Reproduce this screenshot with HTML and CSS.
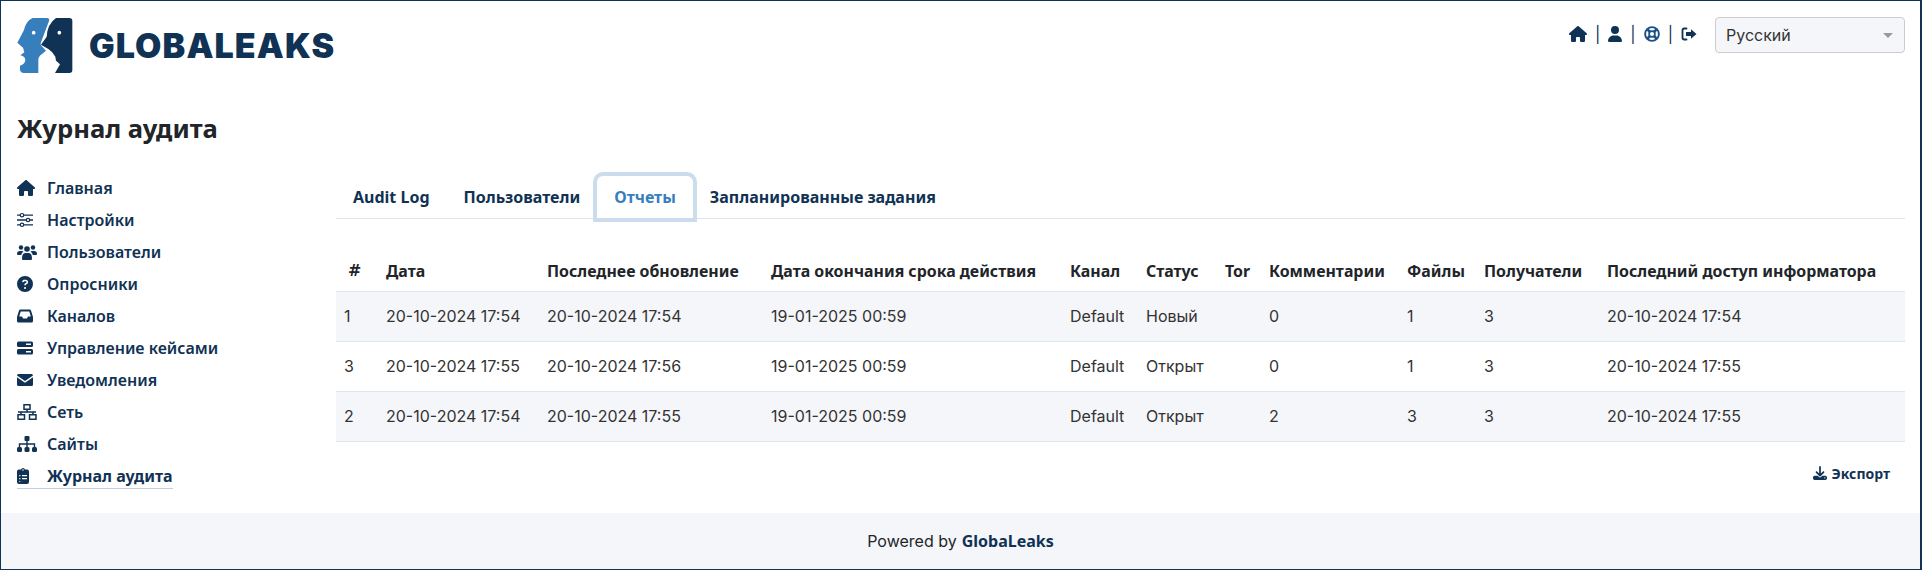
FILE: index.html
```html
<!DOCTYPE html>
<html>
<head>
    <title>Журнал аудита</title>
    <link rel="stylesheet" href="styles.css">
</head>
<body>
    <div class="frame">
        <header class="top">
            <a class="logo">
                <svg class="logo-mark" viewBox="21 21 168 168" width="56" height="56">
                    <path fill="#377ebd" d="M68 24 H110 Q120 24 117 33 L92 100 Q91 105 95 108 L108 122 L96 132 Q85 140 85 150 V189 H42 Q30 189 30 178 V167 Q45 163 46 150 Q46 140 31 136 L43 127 L39 113 L22 98 L42 60 Q48 32 68 24 Z"/>
                    <circle cx="71" cy="68" r="5.500" fill="#fff"/>
                    <path fill="#103254" d="M138 24 H178 Q187 24 187 33 V180 Q187 189 178 189 H135 L150 163 L138 152 L136 140 Q128 125 115 117 L93 104 L110 80 Q112 42 138 24 Z"/>
                    <circle cx="148" cy="68" r="5.500" fill="#fff"/>
                </svg>
                <span class="logo-text">GLOBALEAKS</span>
            </a>
            <div class="top-right">
                <nav class="top-icons">
                    <svg class="ico" viewBox="0 0 576 512" width="18" height="16"><path d="M575.8 255.5c0 18-15 32.1-32 32.1h-32l.7 160.2c0 2.7-.2 5.4-.5 8.1V472c0 22.1-17.9 40-40 40H456c-1.1 0-2.2 0-3.3-.1c-1.4 .1-2.8 .1-4.2 .1H416 392c-22.1 0-40-17.9-40-40V448 384c0-17.7-14.3-32-32-32H256c-17.7 0-32 14.3-32 32v64 24c0 22.1-17.9 40-40 40H160 128.1c-1.5 0-3-.1-4.5-.2c-1.2 .1-2.4 .2-3.6 .2H104c-22.1 0-40-17.9-40-40V360c0-.9 0-1.9 .1-2.8V287.6H32c-18 0-32-14-32-32.1c0-9 3-17 10-24L266.4 8c7-7 15-8 22-8s15 2 21 7L564.8 231.5c8 7 12 15 11 24z"/></svg>
                    <span class="sep">|</span>
                    <svg class="ico" viewBox="0 0 448 512" width="14" height="16"><path d="M224 256A128 128 0 1 0 224 0a128 128 0 1 0 0 256zm-45.7 48C79.8 304 0 383.8 0 482.3C0 498.7 13.3 512 29.7 512H418.3c16.4 0 29.7-13.3 29.7-29.7C448 383.8 368.2 304 269.7 304H178.3z"/></svg>
                    <span class="sep">|</span>
                    <svg class="ico" viewBox="0 0 16 16" width="16" height="16"><circle cx="8" cy="8" r="6.900" fill="none" stroke="#1d5186" stroke-width="1.900"/><circle cx="8" cy="8" r="2.900" fill="none" stroke="#1d5186" stroke-width="1.700"/><path d="M3.400 3.400 L6 6 M10 10 L12.600 12.600 M12.600 3.400 L10 6 M6 10 L3.400 12.600" stroke="#1d5186" stroke-width="2.600"/></svg>
                    <span class="sep">|</span>
                    <svg class="ico" viewBox="0 0 16 16" width="16" height="16"><path d="M5.500 2.500 H3.200 Q1.500 2.500 1.500 4.200 V11.800 Q1.500 13.500 3.200 13.500 H5.500" fill="none" stroke="#103254" stroke-width="1.800" stroke-linecap="round"/><path d="M10 3.200 L15.500 8 L10 12.800 V10 H5 V6 H10 Z"/></svg>
                </nav>
                <div class="lang">
                    <span>Русский</span>
                    <i class="caret"></i>
                </div>
            </div>
        </header>

        <h1 class="page-title">Журнал аудита</h1>

        <div class="main">
            <ul class="side">
                <li><a><svg class="ico" viewBox="0 0 576 512" width="18" height="16"><path d="M575.8 255.5c0 18-15 32.1-32 32.1h-32l.7 160.2c0 2.7-.2 5.4-.5 8.1V472c0 22.1-17.9 40-40 40H456c-1.1 0-2.2 0-3.3-.1c-1.4 .1-2.8 .1-4.2 .1H416 392c-22.1 0-40-17.9-40-40V448 384c0-17.7-14.3-32-32-32H256c-17.7 0-32 14.3-32 32v64 24c0 22.1-17.9 40-40 40H160 128.1c-1.5 0-3-.1-4.5-.2c-1.2 .1-2.4 .2-3.6 .2H104c-22.1 0-40-17.9-40-40V360c0-.9 0-1.9 .1-2.8V287.6H32c-18 0-32-14-32-32.1c0-9 3-17 10-24L266.4 8c7-7 15-8 22-8s15 2 21 7L564.8 231.5c8 7 12 15 11 24z"/></svg>Главная</a></li>
                <li><a><svg class="ico" viewBox="0 0 16 16" width="16" height="16"><path d="M0 3.200 H16 M0 8 H16 M0 12.800 H16" stroke="#103254" stroke-width="1.300"/><circle cx="5" cy="3.200" r="1.700" fill="#fff" stroke="#103254" stroke-width="1.200"/><circle cx="11" cy="8" r="1.700" fill="#fff" stroke="#103254" stroke-width="1.200"/><circle cx="5" cy="12.800" r="1.700" fill="#fff" stroke="#103254" stroke-width="1.200"/></svg>Настройки</a></li>
                <li><a><svg class="ico" viewBox="0 0 20 16" width="20" height="16"><circle cx="4" cy="3.500" r="2.200"/><circle cx="16" cy="3.500" r="2.200"/><circle cx="10" cy="5" r="2.800"/><path d="M0 10 Q0 7 3 7 H5 Q6 7 6.500 7.500 Q4.500 8.500 4.200 11 H1 Q0 11 0 10 Z M20 10 Q20 7 17 7 H15 Q14 7 13.500 7.500 Q15.500 8.500 15.800 11 H19 Q20 11 20 10 Z M5 14.500 Q5 9 8.500 9 H11.500 Q15 9 15 14.500 Q15 16 14 16 H6 Q5 16 5 14.500 Z"/></svg>Пользователи</a></li>
                <li><a><svg class="ico" viewBox="0 0 512 512" width="16" height="16"><path fill-rule="evenodd" d="M256 0a256 256 0 1 1 0 512a256 256 0 1 1 0-512z M169 165c-8 17 3 34 20 34c12 0 20-8 24-19c3-9 10-16 21-16h46c15 0 26 12 26 26c0 10-5 19-13 23l-42 24c-10 6-16 17-16 28v14c0 14 11 25 25 25s25-11 25-25v-1l33-19c24-14 38-39 38-67c0-41-34-74-76-74h-46c-31 0-56 19-65 47z M224 384a32 32 0 1 0 64 0a32 32 0 1 0-64 0z"/></svg>Опросники</a></li>
                <li><a><svg class="ico" viewBox="0 0 16 16" width="16" height="16"><path fill-rule="evenodd" d="M3.500 1.500 H12.500 Q13.600 1.500 14 2.500 L16 9 V13 Q16 14.500 14.500 14.500 H1.500 Q0 14.500 0 13 V9 L2 2.500 Q2.400 1.500 3.500 1.500 Z M3.700 3.500 L2.200 8.500 H5 L6 10.500 H10 L11 8.500 H13.800 L12.300 3.500 Z"/></svg>Каналов</a></li>
                <li><a><svg class="ico" viewBox="0 0 16 16" width="16" height="16"><path fill-rule="evenodd" d="M1.500 1.500 H14.500 Q16 1.500 16 3 V5.500 Q16 7 14.500 7 H1.500 Q0 7 0 5.500 V3 Q0 1.500 1.500 1.500 Z M9 3.600 V5 H14 V3.600 Z M1.500 9 H14.500 Q16 9 16 10.500 V13 Q16 14.500 14.500 14.500 H1.500 Q0 14.500 0 13 V10.500 Q0 9 1.500 9 Z M9 11.100 V12.500 H14 V11.100 Z"/></svg>Управление кейсами</a></li>
                <li><a><svg class="ico" viewBox="0 0 16 16" width="16" height="16"><path d="M1.500 2 H14.500 Q16 2 16 3.500 L8 9 L0 3.500 Q0 2 1.500 2 Z M0 5.300 L8 10.800 L16 5.300 V12.500 Q16 14 14.500 14 H1.500 Q0 14 0 12.500 Z"/></svg>Уведомления</a></li>
                <li><a><svg class="ico" viewBox="0 0 20 16" width="20" height="16"><path fill="none" stroke="#103254" stroke-width="1.500" d="M7 .8 H13 V5.200 H7 Z M1 10.800 H7.500 V15.200 H1 Z M12.500 10.800 H19 V15.200 H12.500 Z M10 5 V8 M1 8 H19 M4 8 V11 M16 8 V11"/></svg>Сеть</a></li>
                <li><a><svg class="ico" viewBox="0 0 20 16" width="20" height="16"><rect x="7.500" y="0" width="5" height="5" rx="1"/><rect x="0" y="11" width="5" height="5" rx="1.500"/><rect x="7.500" y="11" width="5" height="5" rx="1.500"/><rect x="15" y="11" width="5" height="5" rx="1.500"/><path fill="none" stroke="#103254" stroke-width="1.400" d="M10 5 V11 M2.500 11 V8 H17.500 V11"/></svg>Сайты</a></li>
                <li><a class="current"><svg class="ico" viewBox="0 0 12 16" width="12" height="16"><path fill-rule="evenodd" d="M4 1.500 Q4.500 0 6 0 Q7.500 0 8 1.500 H10 Q12 1.500 12 3.500 V14 Q12 16 10 16 H2 Q0 16 0 14 V3.500 Q0 1.500 2 1.500 Z M5.200 2 a.8 .8 0 1 0 1.600 0 a.8 .8 0 1 0-1.600 0 Z M2.200 7 h1.200 v1.200 h-1.200 Z M5 7 h5 v1.200 h-5 Z M2.200 10 h1.200 v1.200 h-1.200 Z M5 10 h5 v1.200 h-5 Z M2.200 13 h1.200 v.8 h-1.200 Z"/></svg>Журнал аудита</a></li>
            </ul>

            <section class="content">
                <div class="tabs">
                    <a class="tab">Audit Log</a>
                    <a class="tab">Пользователи</a>
                    <a class="tab active">Отчеты</a>
                    <a class="tab">Запланированные задания</a>
                </div>

                <table class="reports">
                    <thead>
                        <tr>
                            <th class="num">#</th>
                            <th>Дата</th>
                            <th>Последнее обновление</th>
                            <th>Дата окончания срока действия</th>
                            <th>Канал</th>
                            <th>Статус</th>
                            <th>Tor</th>
                            <th>Комментарии</th>
                            <th>Файлы</th>
                            <th>Получатели</th>
                            <th>Последний доступ информатора</th>
                        </tr>
                    </thead>
                    <tbody>
                        <tr>
                            <td>1</td><td>20-10-2024 17:54</td><td>20-10-2024 17:54</td><td>19-01-2025 00:59</td><td>Default</td><td>Новый</td><td></td><td>0</td><td>1</td><td>3</td><td>20-10-2024 17:54</td>
                        </tr>
                        <tr>
                            <td>3</td><td>20-10-2024 17:55</td><td>20-10-2024 17:56</td><td>19-01-2025 00:59</td><td>Default</td><td>Открыт</td><td></td><td>0</td><td>1</td><td>3</td><td>20-10-2024 17:55</td>
                        </tr>
                        <tr>
                            <td>2</td><td>20-10-2024 17:54</td><td>20-10-2024 17:55</td><td>19-01-2025 00:59</td><td>Default</td><td>Открыт</td><td></td><td>2</td><td>3</td><td>3</td><td>20-10-2024 17:55</td>
                        </tr>
                    </tbody>
                </table>

                <div class="export-row">
                    <a class="export"><svg class="ico" viewBox="0 0 512 512" width="14" height="14"><path d="M288 32c0-17.700-14.300-32-32-32s-32 14.300-32 32V274.700l-73.400-73.400c-12.500-12.500-32.800-12.500-45.300 0s-12.500 32.800 0 45.300l128 128c12.500 12.500 32.800 12.500 45.300 0l128-128c12.500-12.500 12.500-32.800 0-45.300s-32.800-12.500-45.300 0L288 274.700V32zM64 352c-35.300 0-64 28.700-64 64v32c0 35.300 28.700 64 64 64H448c35.300 0 64-28.700 64-64V416c0-35.300-28.700-64-64-64H346.500l-45.300 45.300c-25 25-65.500 25-90.500 0L165.500 352H64zm368 56a24 24 0 1 1 0 48 24 24 0 1 1 0-48z"/></svg>Экспорт</a>
                </div>
            </section>
        </div>

        <footer class="foot">Powered by <b>GlobaLeaks</b></footer>
    </div>
</body>
</html>
```

FILE: styles.css
```css
html, body {
    margin: 0;
    padding: 0;
    height: 100%;
    background-color: #fff;
}

.frame {
    box-sizing: border-box;
    height: 570px;
    border: solid #103254;
    border-width: 1px 2px 1px 1px;
    display: flex;
    flex-direction: column;
    font-family: Inter, sans-serif;
    font-size: 16px;
    color: #212529;
}

.ico {
    fill: #103254;
    flex: none;
}

.top {
    display: flex;
    justify-content: space-between;
    padding: 16px 15px 0 16px;
    height: 81px;
    box-sizing: border-box;
}

.logo {
    display: flex;
    align-items: center;
    height: 56px;
}

.logo-text {
    margin-left: 16px;
    font-family: Inter, sans-serif;
    font-weight: 900;
    font-size: 34px;
    letter-spacing: 1.1px;
    color: #103254;
}

.top-right {
    display: flex;
    align-items: flex-start;
}

.top-icons {
    display: flex;
    align-items: center;
    gap: 8px;
    height: 20px;
    margin-top: 7px;
    margin-right: 18px;
}

.sep {
    color: #103254;
    font-size: 16px;
    line-height: 20px;
}

.lang {
    box-sizing: border-box;
    width: 190px;
    height: 36px;
    display: flex;
    align-items: center;
    justify-content: space-between;
    padding: 0 11px 0 10px;
    background-color: #f5f6fa;
    border: 1px solid #ccc;
    border-radius: 4px;
    color: #333;
}

.caret {
    width: 0;
    height: 0;
    border-left: 5px solid transparent;
    border-right: 5px solid transparent;
    border-top: 5px solid #999;
}

.page-title {
    margin: 32px 0 0 16px;
    font-family: "Noto Sans", sans-serif;
    font-weight: 700;
    font-size: 25.6px;
    line-height: 30px;
    color: #212529;
}

.main {
    display: flex;
    flex: 1;
    margin-top: 28px;
}

.side {
    list-style: none;
    margin: 0;
    padding: 0 0 0 16px;
    width: 335px;
    box-sizing: border-box;
    font-family: "Noto Sans", sans-serif;
    font-weight: 600;
    font-size: 16px;
    color: #103254;
}

.side li {
    display: flex;
    align-items: center;
    height: 32px;
}

.side a {
    display: grid;
    grid-template-columns: 30px auto;
    align-items: center;
    line-height: 24px;
}

.side a.current {
    font-weight: 700;
    border-bottom: 1px solid #c5cde0;
}

.content {
    flex: 1;
    padding: 4px 15px 0 0;
}

.tabs {
    display: flex;
    height: 43px;
    border-bottom: 1px solid #dee5ee;
    box-sizing: border-box;
    font-family: "Noto Sans", sans-serif;
    font-weight: 700;
    font-size: 16px;
    color: #103254;
}

.tab {
    padding: 0 17px;
    height: 42px;
    line-height: 42px;
}

.tab.active {
    color: #377ebd;
    background-color: #fff;
    border-radius: 6px 6px 0 0;
    box-shadow: 0 0 0 4px #cbdcec;
}

.reports {
    width: 100%;
    table-layout: fixed;
    border-collapse: collapse;
    margin-top: 32px;
}

.reports th {
    box-sizing: border-box;
    text-align: left;
    font-family: "Noto Sans", sans-serif;
    font-weight: 700;
    font-size: 15.9px;
    height: 40px;
    padding: 0 8px;
    color: #212529;
    border-bottom: 1px solid #dee5ee;
    white-space: nowrap;
}

.reports th.num {
    font-family: "DejaVu Sans", sans-serif;
    padding-left: 12px;
}

.reports th:nth-child(1) { width: 42px; }
.reports th:nth-child(2) { width: 161px; }
.reports th:nth-child(3) { width: 224px; }
.reports th:nth-child(4) { width: 299px; }
.reports th:nth-child(5) { width: 76px; }
.reports th:nth-child(6) { width: 79px; }
.reports th:nth-child(7) { width: 44px; }
.reports th:nth-child(8) { width: 138px; }
.reports th:nth-child(9) { width: 77px; }
.reports th:nth-child(10) { width: 123px; }

.reports td {
    height: 49px;
    padding: 0 8px;
    color: #333;
    border-bottom: 1px solid #dee5ee;
    white-space: nowrap;
}

.reports tbody tr:nth-child(odd) {
    background-color: #f5f6fa;
}

.export-row {
    display: flex;
    justify-content: flex-end;
    padding: 22px 15px 0 0;
}

.export {
    display: flex;
    align-items: center;
    gap: 5px;
    font-family: "Noto Sans", sans-serif;
    font-weight: 700;
    font-size: 14px;
    color: #103254;
}

.foot {
    height: 56px;
    display: flex;
    align-items: center;
    justify-content: center;
    gap: 5px;
    background-color: #f5f6fa;
    font-size: 16px;
    color: #212529;
}

.foot b {
    font-family: "Noto Sans", sans-serif;
    color: #103254;
}
```
